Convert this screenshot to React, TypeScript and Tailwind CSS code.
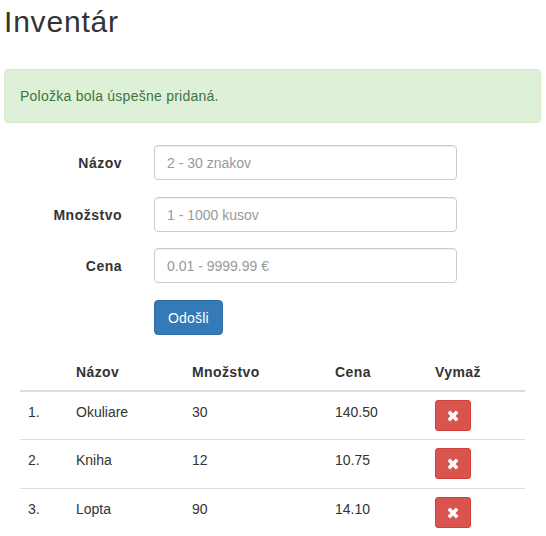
const items = [
  { name: "Okuliare", qty: "30", price: "140.50" },
  { name: "Kniha", qty: "12", price: "10.75" },
  { name: "Lopta", qty: "90", price: "14.10" },
];

const fields = [
  { label: "Názov", placeholder: "2 - 30 znakov", mb: "mb-[17px]" },
  { label: "Množstvo", placeholder: "1 - 1000 kusov", mb: "mb-[16px]" },
  { label: "Cena", placeholder: "0.01 - 9999.99 €", mb: "mb-[17px]" },
];

const RemoveIcon = () => (
  <svg width="12" height="12" viewBox="0 0 12 12" aria-hidden="true">
    <path d="M1.8 1.8 L10.2 10.2 M10.2 1.8 L1.8 10.2" stroke="#fff" strokeWidth="3.6" strokeLinecap="butt" />
  </svg>
);

export default function App() {
  return (
    <div className="min-h-[536px] bg-white pl-[4px] pr-[5px] pt-[5px] text-[14px] leading-[20px] text-[#333] font-['Liberation_Sans',Arial,sans-serif]">
      {/* Heading */}
      <h1 className="text-[30px] leading-[33px] font-medium tracking-[0.8px]">Inventár</h1>

      {/* Success alert */}
      <div className="mt-[31px] rounded-[4px] border border-[#d6e9c6] bg-[#dff0d8] px-[15px] py-[16px] text-[#3c763d] tracking-[0.25px]">
        Položka bola úspešne pridaná.
      </div>

      {/* Form */}
      <form className="mt-[22px]" onSubmit={(e) => e.preventDefault()}>
        {fields.map((f) => (
          <div key={f.label} className={`flex items-center ${f.mb}`}>
            <label className="w-[118px] text-right font-bold tracking-[0.5px]">{f.label}</label>
            <input
              type="text"
              placeholder={f.placeholder}
              className="ml-[32px] h-[35px] w-[303px] rounded-[4px] border border-[#ccc] px-[12px] text-[14px] text-[#555] shadow-[inset_0_1px_1px_rgba(0,0,0,0.075)] outline-none placeholder:text-[#999]"
            />
          </div>
        ))}
        <div className="pl-[150px]">
          <button
            type="submit"
            className="h-[35px] rounded-[4px] border border-[#2e6da4] bg-[#337ab7] px-[13px] text-[14px] tracking-[0.2px] text-white"
          >
            Odošli
          </button>
        </div>
      </form>

      {/* Table */}
      <div className="ml-[16px] mt-[19px] w-[505px]">
        <div className="grid grid-cols-[48px_116px_143px_100px_98px] border-b-2 border-[#ddd] font-bold tracking-[0.4px]">
          <div className="p-[8px]"></div>
          <div className="p-[8px]">Názov</div>
          <div className="p-[8px]">Množstvo</div>
          <div className="p-[8px]">Cena</div>
          <div className="p-[8px]">Vymaž</div>
        </div>
        {items.map((it, i) => (
          <div
            key={it.name}
            className={`grid grid-cols-[48px_116px_143px_100px_98px] ${i > 0 ? "h-[49px] border-t border-[#ddd]" : "h-[47px]"}`}
          >
            <div className="px-[8px] pt-[10px]">{i + 1}.</div>
            <div className="px-[8px] pt-[10px]">{it.name}</div>
            <div className="px-[8px] pt-[10px]">{it.qty}</div>
            <div className="px-[8px] pt-[10px]">{it.price}</div>
            <div className="px-[8px] pt-[8px]">
              <button className="flex h-[31px] w-[36px] items-center justify-center rounded-[3px] border border-[#d43f3a] bg-[#d9534f]">
                <RemoveIcon />
              </button>
            </div>
          </div>
        ))}
      </div>
    </div>
  );
}
